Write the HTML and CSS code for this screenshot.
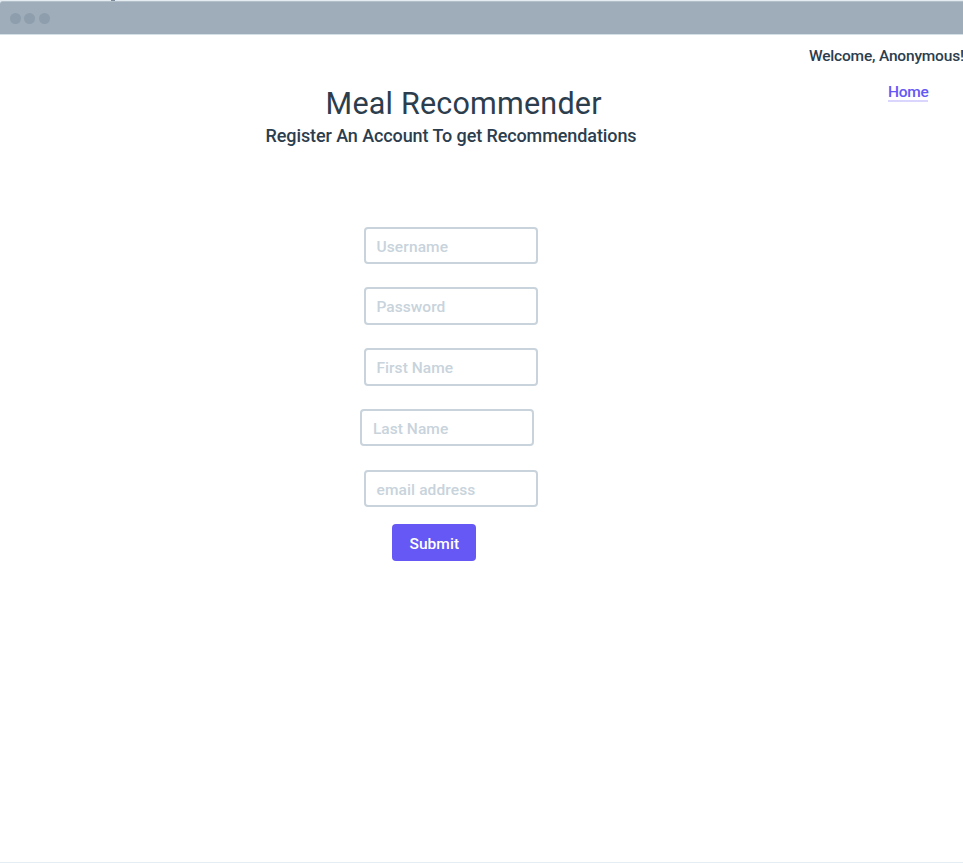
FILE: index.html
```
<!DOCTYPE html>
<html lang="en">
<head>
<meta charset="utf-8">
<title>Meal Recommender</title>
<link rel="stylesheet" href="styles.css">
</head>
<body>
<div class="window">
  <div class="titlebar"><i class="dot"></i><i class="dot"></i><i class="dot"></i><b class="notch"></b></div>
  <main class="page">
    <header class="intro">
      <h1>Meal Recommender</h1>
      <h2>Register An Account To get Recommendations</h2>
    </header>
    <nav class="account">
      <span class="welcome">Welcome, Anonymous!</span>
      <a class="home" href="#">Home</a>
    </nav>
    <form class="form">
      <div class="field user">Username</div>
      <div class="field">Password</div>
      <div class="field">First Name</div>
      <div class="field shifted">Last Name</div>
      <div class="field email">email address</div>
      <button class="submit" type="button">Submit</button>
    </form>
  </main>
</div>
</body>
</html>
```
FILE: styles.css
```
* { box-sizing: border-box; }
body {
  margin: 0;
  overflow: hidden;
  background: #e6edf2;
  color: #2c3e4e;
  font-family: Roboto, "Open Sans", sans-serif;
}
.window {
  height: 863px;
  padding-top: 1px;
  display: flex;
  flex-direction: column;
}
.titlebar {
  position: relative;
  height: 33px;
  flex: none;
  display: flex;
  align-items: center;
  gap: 3.4px;
  padding-left: 10px;
  background: #9eadb9;
  border-top: 1px solid #b3c0ca;
  border-top-left-radius: 3px;
}
.dot { width: 11px; height: 11px; border-radius: 50%; background: #8e9eac; }
.notch { position: absolute; left: 111px; top: -2px; width: 4px; height: 1px; background: #7b8b99; }
.page {
  height: 828px;
  flex: none;
  display: grid;
  grid-template-columns: 809px 154px;
  grid-template-rows: 191.6px 1fr;
  background: #fff;
  border-top: 1px solid #d5dfe6;
}
.intro { padding: 49px 0 0 265.6px; white-space: nowrap; }
h1, h2 { margin: 0; }
h1 { padding-left: 60px; font-size: 30.5px; line-height: 40px; font-weight: 400; letter-spacing: 0.2px; }
h2 { font-size: 18px; line-height: 24px; font-weight: 500; letter-spacing: -0.1px; }
.account {
  display: flex;
  flex-direction: column;
  align-items: flex-start;
  padding-top: 11px;
  font-size: 15.5px;
  font-weight: 500;
  line-height: 20px;
  white-space: nowrap;
  letter-spacing: -0.19px;
}
.home {
  margin: 16px 0 0 79px;
  height: 20px;
  line-height: 20px;
  color: #6558f5;
  text-decoration: none;
  letter-spacing: -0.3px;
  border-bottom: 2px solid #d9d5fd;
}
.form {
  grid-column: 1 / -1;
  padding-left: 364px;
  display: flex;
  flex-direction: column;
}
.field {
  width: 173.6px;
  height: 37.5px;
  margin-bottom: 23.3px;
  display: flex;
  align-items: center;
  padding: 2px 0 0 10.5px;
  border: 2px solid #c8d3dc;
  border-radius: 4px;
  color: #c8d3dc;
  font-size: 15.5px;
  font-weight: 500;
  letter-spacing: 0.05px;
}
.user, .email { letter-spacing: 0.12px; }
.user { padding-top: 3px; }
.shifted { margin-left: -3.6px; }
.submit {
  width: 84px;
  height: 37.5px;
  margin: -7px 0 0 28.3px;
  padding: 3px 0 0;
  border: 0;
  border-radius: 4px;
  background: #6558f5;
  color: #fff;
  font: 500 15.5px Roboto, sans-serif;
  letter-spacing: 0.05px;
}
```
